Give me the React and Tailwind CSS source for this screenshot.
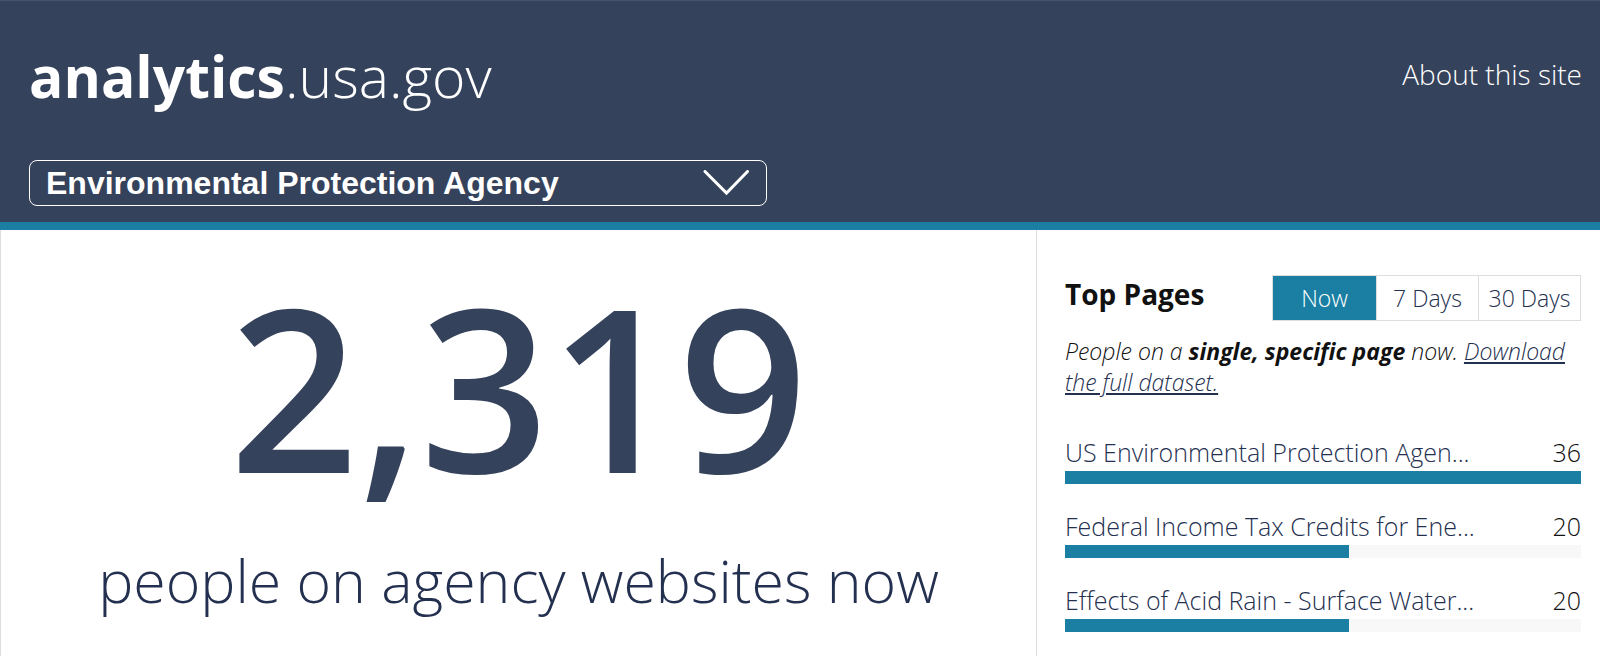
const periods = ["Now", "7 Days", "30 Days"];
const pages = [
  { title: "US Environmental Protection Agency", shown: "US Environmental Protection Agen...", count: 36, share: 100 },
  { title: "Federal Income Tax Credits for Energy Efficiency", shown: "Federal Income Tax Credits for Ene...", count: 20, share: 55 },
  { title: "Effects of Acid Rain - Surface Waters", shown: "Effects of Acid Rain - Surface Water...", count: 20, share: 55 },
];

export default function App() {
  return (
    <div className="min-h-screen bg-white font-['Open_Sans',sans-serif] text-[#35425b]">
      <header className="border-t border-b-8 border-t-[#46536c] border-b-[#1b7fa3] bg-[#35425b] pr-[18px] pb-4 pl-[29px] text-white">
        <div className="flex items-start justify-between pt-[35px]">
          <h1 className="text-[57px] leading-[80px] font-light">
            <a href="#home"><span className="font-bold">analytics</span>.usa.gov</a>
          </h1>
          <a href="#about" className="mt-[18px] text-[28px] leading-10 font-light">About this site</a>
        </div>
        <div className="relative mt-11 w-[738px] max-w-full">
          <select aria-label="Agency" className="block h-[46px] w-full appearance-none rounded-lg border border-white bg-transparent pl-4 font-['Liberation_Sans',sans-serif] text-[32px] leading-10 font-bold text-white">
            <option>Environmental Protection Agency</option>
          </select>
          <svg viewBox="0 0 46 26" className="pointer-events-none absolute top-2.5 right-[18px] h-[26px] w-[46px]" fill="none" stroke="currentColor" strokeWidth="3" strokeLinecap="round"><path d="M2 1.5 23.5 23 44.5 1.5" /></svg>
        </div>
      </header>
      <main className="grid grid-cols-[1037px_minmax(0,1fr)]">
        <section className="border-x border-[#ddd] pt-[30px] pb-8 text-center">
          <p className="text-[226px] leading-[250px] font-semibold">2,319</p>
          <p className="mt-[26px] text-[59px] leading-[88px] font-light text-[#24304f]">people on agency websites now</p>
        </section>
        <section className="pt-[45px] pr-[19px] pl-7 text-[#24304f]">
          <div className="flex items-start justify-between">
            <h2 className="text-[28px] leading-[38px] font-bold text-[#111]">Top Pages</h2>
            <div className="flex border border-[#ddd]">
              {periods.map((p, i) => (
                <button key={p} className={i === 0 ? "h-11 w-[103px] bg-[#1b7fa3] text-[23px] font-light text-white" : "h-11 w-[102px] border-l border-[#ddd] text-[23px] font-light whitespace-nowrap"}>{p}</button>
              ))}
            </div>
          </div>
          <p className="mt-[15px] text-[23px] leading-[31px] font-light text-[#111] italic">
            People on a <strong className="font-bold">single, specific page</strong> now. <a href="#dataset" className="text-[#24304f] underline">Download the full dataset.</a>
          </p>
          <ul className="mt-[35px] space-y-[23px]">
            {pages.map((p) => (
              <li key={p.title}>
                <div className="flex justify-between text-[25px] leading-[38px] font-light">
                  <a href="#page" title={p.title}>{p.shown}</a><span className="text-[#111]">{p.count}</span>
                </div>
                <div className="h-[13px] bg-[#f8f8f8]"><div className="h-[13px] bg-[#1b7fa3]" style={{ width: `${p.share}%` }} /></div>
              </li>
            ))}
          </ul>
        </section>
      </main>
    </div>
  );
}
